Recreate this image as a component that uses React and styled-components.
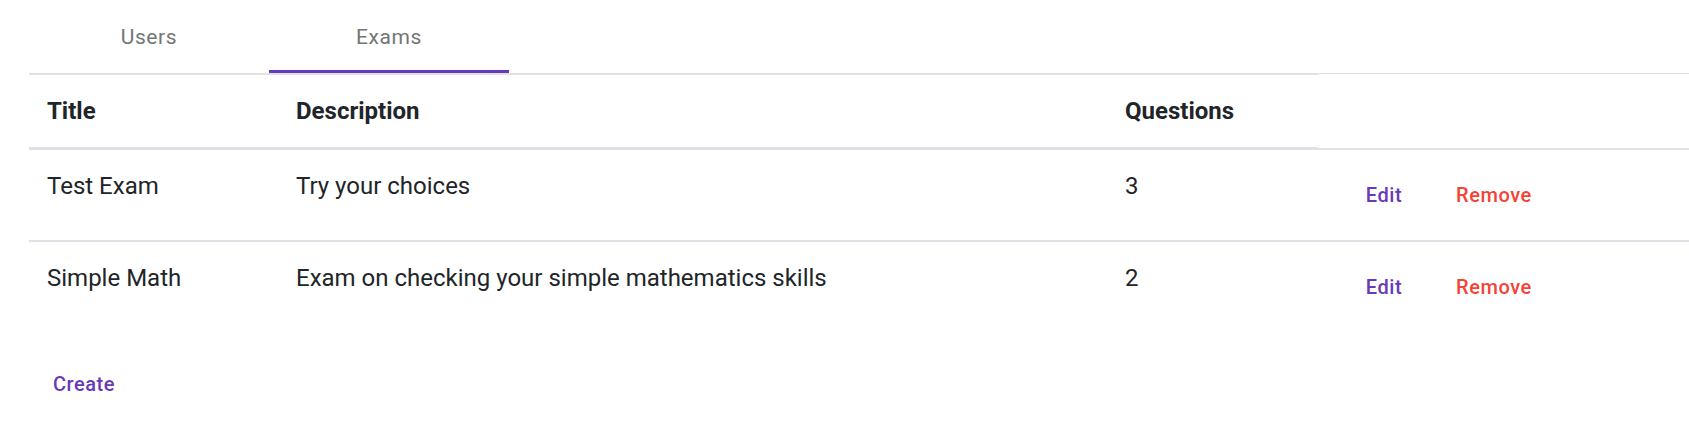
import { useState } from 'react';
import styled, { createGlobalStyle } from 'styled-components';

const colors = {
  primary: '#673ab7',
  danger: '#f44336',
  text: '#212529',
  muted: '#757575',
  border: '#dee2e6',
};

const GlobalStyle = createGlobalStyle`
  body {
    margin: 0;
    background: #fff;
    font-family: Roboto, "Liberation Sans", Arial, sans-serif;
    color: ${colors.text};
  }
`;

const exams = [
  { id: 1, title: 'Test Exam', description: 'Try your choices', questions: 3 },
  { id: 2, title: 'Simple Math', description: 'Exam on checking your simple mathematics skills', questions: 2 },
];

function App() {
  const [tab, setTab] = useState(1);

  return (
    <>
      <GlobalStyle />
      <Page>
        <TabBar>
          {['Users', 'Exams'].map((label, i) => (
            <Tab key={label} $active={tab === i} onClick={() => setTab(i)}>
              {label}
            </Tab>
          ))}
        </TabBar>

        <Table>
          <colgroup>
            <col style={{ width: 249 }} />
            <col style={{ width: 829 }} />
            <col style={{ width: 211 }} />
            <col />
          </colgroup>
          <thead>
            <tr>
              <Th>Title</Th>
              <Th>Description</Th>
              <Th>Questions</Th>
            </tr>
          </thead>
          <tbody>
            {exams.map((exam) => (
              <tr key={exam.id}>
                <Td>{exam.title}</Td>
                <Td>{exam.description}</Td>
                <Td>{exam.questions}</Td>
                <Td>
                  <Actions>
                    <TextButton $color={colors.primary}>Edit</TextButton>
                    <TextButton $color={colors.danger}>Remove</TextButton>
                  </Actions>
                </Td>
              </tr>
            ))}
          </tbody>
        </Table>

        <CreateRow>
          <TextButton $color={colors.primary}>Create</TextButton>
        </CreateRow>
      </Page>
    </>
  );
}

export default App;

const Page = styled.div`
  padding: 1px 0 0 29px;
`;

const TabBar = styled.div`
  display: flex;
  border-bottom: 1.5px solid ${colors.border};
`;

const Tab = styled.button`
  position: relative;
  width: 240px;
  height: 72px;
  border: none;
  background: none;
  padding: 0;
  font-family: Roboto, "Liberation Sans", Arial, sans-serif;
  font-size: 21px;
  font-weight: 400;
  letter-spacing: 0.02857em;
  color: ${colors.muted};
  cursor: pointer;

  &::after {
    content: '';
    position: absolute;
    left: 0;
    right: 0;
    bottom: 0;
    height: 3px;
    background: ${(p) => (p.$active ? colors.primary : 'transparent')};
  }
`;

const Table = styled.table`
  width: 100%;
  table-layout: fixed;
  border-collapse: collapse;
  font-size: 24px;
  line-height: 1.5;
  color: ${colors.text};
  margin-bottom: 24px;
`;

const Th = styled.th`
  text-align: left;
  font-weight: 700;
  padding: 18px;
  vertical-align: bottom;
  border-top: 1.5px solid ${colors.border};
  border-bottom: 3px solid ${colors.border};
`;

const Td = styled.td`
  padding: 18px;
  vertical-align: top;
  border-top: 2px solid ${colors.border};
`;

const Actions = styled.div`
  display: flex;
  gap: 12px;
`;

const TextButton = styled.button`
  min-width: 96px;
  padding: 9px 12px;
  border: none;
  border-radius: 6px;
  background: none;
  font-family: Roboto, "Liberation Sans", Arial, sans-serif;
  font-size: 20px;
  font-weight: 500;
  line-height: 36.75px;
  letter-spacing: 0.02857em;
  color: ${(p) => p.$color};
  cursor: pointer;
`;

const CreateRow = styled.div`
  display: flex;
  padding-left: 7px;
`;
